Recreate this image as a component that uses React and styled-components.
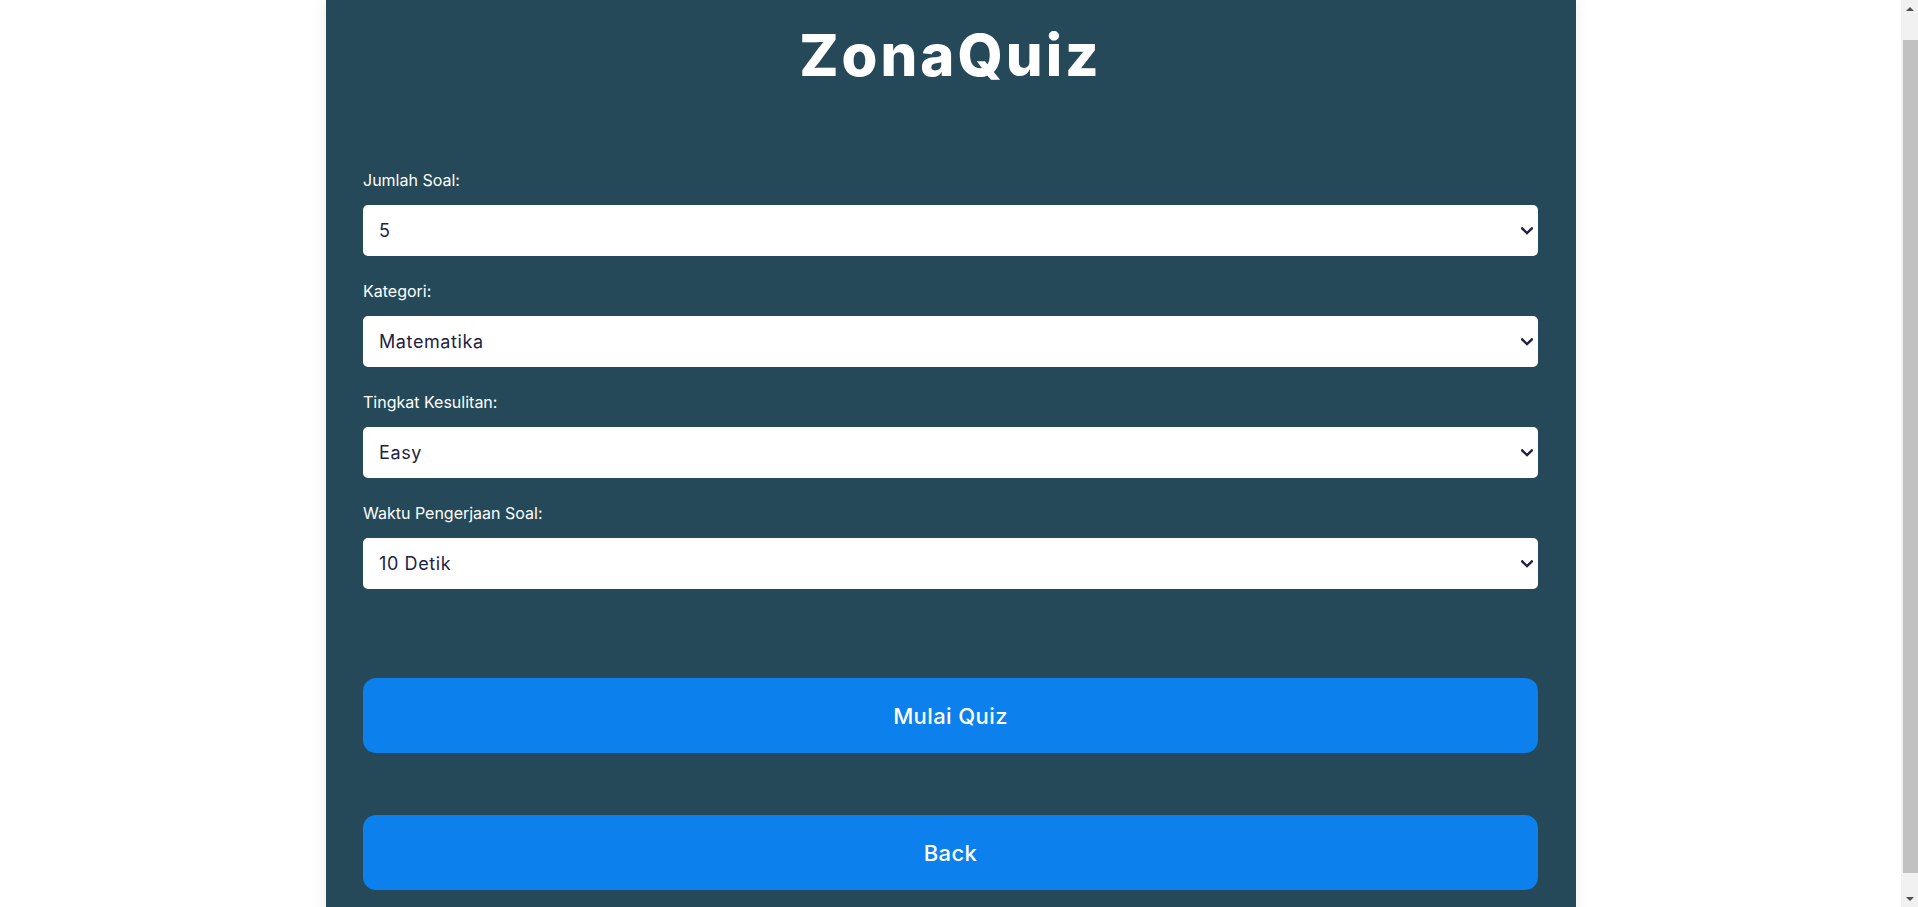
import React from "react";
import styled, { createGlobalStyle } from "styled-components";

const Global = createGlobalStyle`
  html, body { margin: 0; padding: 0; background: #ffffff; }
  body { font-family: "Inter", "Open Sans", sans-serif; overflow: hidden; }
  * { box-sizing: border-box; }
`;

const Viewport = styled.div`
  display: grid;
  grid-template-columns: 1fr 17px;
  height: 100vh;
  overflow: hidden;
`;

const Content = styled.div`
  overflow: hidden;
  min-width: 0;
`;

const Scrollbar = styled.div`
  display: flex;
  flex-direction: column;
  background: #f1f1f1;
  height: 100%;
`;

const ScrollArrow = styled.div`
  height: ${(p) => (p.$top ? "40px" : "34px")};
  display: flex;
  align-items: ${(p) => (p.$top ? "flex-start" : "flex-end")};
  justify-content: center;
  padding: ${(p) => (p.$top ? "7px 0 0" : "0 0 6px")};
`;

const Triangle = styled.div`
  width: 0;
  height: 0;
  border-left: 4px solid transparent;
  border-right: 4px solid transparent;
  ${(p) =>
    p.$up
      ? "border-bottom: 4px solid #505050;"
      : "border-top: 4px solid #505050;"}
`;

const Thumb = styled.div`
  flex: 1;
  margin-left: 2px;
  background: #c1c1c1;
`;

const Panel = styled.main`
  width: 1250px;
  min-height: 100%;
  margin: 0 auto;
  background: #254959;
  box-shadow: 0 0 14px rgba(0, 0, 0, 0.08);
  padding: 0 37.5px 52px;
`;

const Title = styled.h1`
  margin: 0;
  padding: 21px 0 0;
  text-align: center;
  color: #ffffff;
  font-family: "Inter", sans-serif;
  font-weight: 800;
  font-size: 58px;
  line-height: 68px;
  letter-spacing: 3px;
`;

const Form = styled.form`
  display: flex;
  flex-direction: column;
  margin-top: 81px;
`;

const Field = styled.div`
  display: flex;
  flex-direction: column;
  gap: 14px;
  margin-bottom: 25px;
`;

const Label = styled.label`
  color: #ffffff;
  font-family: "Inter", sans-serif;
  font-size: 16px;
  line-height: 21px;
  font-weight: 400;
`;

const SelectWrap = styled.div`
  position: relative;
  height: 51px;
`;

const Select = styled.select`
  appearance: none;
  -webkit-appearance: none;
  width: 100%;
  height: 51px;
  border: none;
  border-radius: 5px;
  background: #ffffff;
  color: #1e2243;
  font-family: "Inter", sans-serif;
  font-size: 18px;
  letter-spacing: 0.6px;
  padding: 0 40px 0 16px;
  outline: none;
`;

const Chevron = styled.svg`
  position: absolute;
  right: 5px;
  top: 50%;
  transform: translateY(-50%);
  width: 12px;
  height: 8px;
  pointer-events: none;
`;

const Buttons = styled.div`
  display: flex;
  flex-direction: column;
  gap: 62px;
  margin-top: 64px;
`;

const Button = styled.button`
  width: 100%;
  height: 75px;
  border: none;
  border-radius: 13px;
  background: #0c80ec;
  color: #ffffff;
  font-family: "Inter", sans-serif;
  font-size: 22px;
  letter-spacing: 0.4px;
  font-weight: 500;
  cursor: pointer;
`;

const fields = [
  { id: "jumlah", label: "Jumlah Soal:", value: "5", options: ["5", "10", "15", "20"] },
  { id: "kategori", label: "Kategori:", value: "Matematika", options: ["Matematika", "IPA", "Sejarah", "Bahasa"] },
  { id: "tingkat", label: "Tingkat Kesulitan:", value: "Easy", options: ["Easy", "Medium", "Hard"] },
  { id: "waktu", label: "Waktu Pengerjaan Soal:", value: "10 Detik", options: ["10 Detik", "20 Detik", "30 Detik"] },
];

export default function App() {
  return (
    <>
      <Global />
      <Viewport>
        <Content>
          <Panel>
            <Title>ZonaQuiz</Title>
            <Form onSubmit={(e) => e.preventDefault()}>
              {fields.map((f) => (
                <Field key={f.id}>
                  <Label htmlFor={f.id}>{f.label}</Label>
                  <SelectWrap>
                    <Select id={f.id} defaultValue={f.value}>
                      {f.options.map((o) => (
                        <option key={o} value={o}>{o}</option>
                      ))}
                    </Select>
                    <Chevron viewBox="0 0 12 8">
                      <path d="M1.2 1.4 L6 6 L10.8 1.4" fill="none" stroke="#1e2243" strokeWidth="2.4" strokeLinecap="square" />
                    </Chevron>
                  </SelectWrap>
                </Field>
              ))}
              <Buttons>
                <Button type="button">Mulai Quiz</Button>
                <Button type="button">Back</Button>
              </Buttons>
            </Form>
          </Panel>
        </Content>
        <Scrollbar aria-hidden="true">
          <ScrollArrow $top>
            <Triangle $up />
          </ScrollArrow>
          <Thumb />
          <ScrollArrow>
            <Triangle />
          </ScrollArrow>
        </Scrollbar>
      </Viewport>
    </>
  );
}
